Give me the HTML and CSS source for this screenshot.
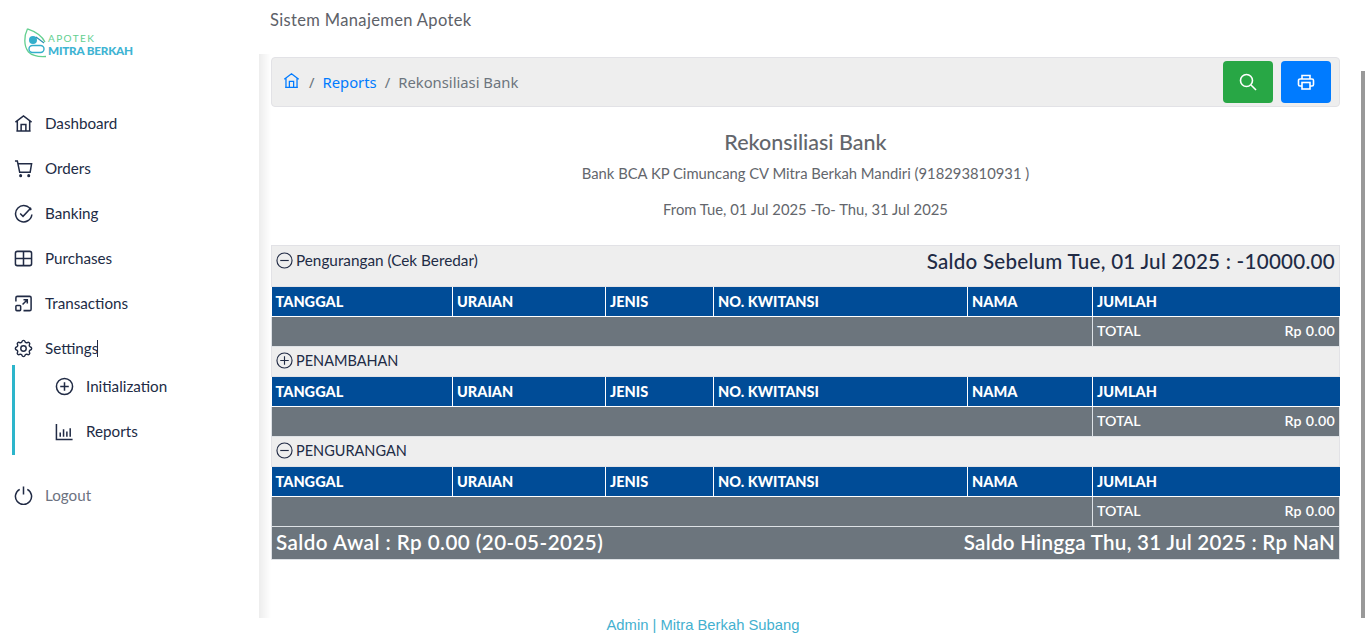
FILE: index.html
```html
<!DOCTYPE html>
<html lang="id">
<head>
<meta charset="utf-8">
<title>Rekonsiliasi Bank</title>
<link rel="stylesheet" href="styles.css">
</head>
<body>
<div class="app">
  <aside class="sidebar">
    <div class="logo">
      <svg class="logo-mark" viewBox="0 0 23 30" width="23" height="30">
        <path d="M3.500 .8C0 8-.5 18 4.500 24c4 4 10 5 17.500 4.500M3.500 .8C10 3 17 6 21 14" fill="none" stroke="#62cf8f" stroke-width="1.300"/>
        <circle cx="9" cy="12" r="4" fill="#33aecb"/>
        <rect x="5" y="17.500" width="15" height="7" rx="3.500" fill="none" stroke="#33aecb" stroke-width="1.400"/>
        <path d="M12 9l8 6" stroke="#2b8fb0" stroke-width="1.200"/>
      </svg>
      <div class="logo-text">
        <span class="logo-top">APOTEK</span>
        <span class="logo-bottom">MITRA BERKAH</span>
      </div>
    </div>
    <nav class="nav">
      <a class="nav-item"><svg class="ic" viewBox="0 0 20 20"><path d="M1.500 8.500 10 2l8.500 6.500M3.500 7.500V18h13V7.500M7.500 18v-7h5v7M2.500 18h15"/></svg><span>Dashboard</span></a>
      <a class="nav-item"><svg class="ic" viewBox="0 0 20 20"><path d="M1 2h2.500l2.500 12h11l1.500-9H4"/><circle cx="7" cy="17.500" r=".8"/><circle cx="15.500" cy="17.500" r=".8"/></svg><span>Orders</span></a>
      <a class="nav-item"><svg class="ic" viewBox="0 0 20 20"><path d="M18 6.500A8.600 8.600 0 1 0 18.800 11"/><path d="M6.500 10l3 3 8.500-9"/></svg><span>Banking</span></a>
      <a class="nav-item"><svg class="ic" viewBox="0 0 20 20"><rect x="1.500" y="2.500" width="17" height="15" rx="2"/><path d="M10 2.500v15M1.500 10h17"/></svg><span>Purchases</span></a>
      <a class="nav-item"><svg class="ic" viewBox="0 0 20 20"><path d="M2 8V4a1.500 1.500 0 0 1 1.500-1.500h13A1.500 1.500 0 0 1 18 4v12a1.500 1.500 0 0 1-1.500 1.500H10"/><rect x="2" y="12" width="5" height="5.500" rx="1"/><path d="M9 11l5-5M10 6h4v4"/></svg><span>Transactions</span></a>
      <a class="nav-item"><svg class="ic" viewBox="1.500 1.500 21 21"><circle cx="12" cy="12" r="3"/><path d="M10.325 4.317c.426-1.756 2.924-1.756 3.350 0a1.724 1.724 0 0 0 2.573 1.066c1.543-.94 3.310.826 2.370 2.370a1.724 1.724 0 0 0 1.065 2.572c1.756.426 1.756 2.924 0 3.350a1.724 1.724 0 0 0-1.066 2.573c.94 1.543-.826 3.310-2.370 2.370a1.724 1.724 0 0 0-2.572 1.065c-.426 1.756-2.924 1.756-3.350 0a1.724 1.724 0 0 0-2.573-1.066c-1.543.94-3.310-.826-2.370-2.370a1.724 1.724 0 0 0-1.065-2.572c-1.756-.426-1.756-2.924 0-3.350a1.724 1.724 0 0 0 1.066-2.573c-.94-1.543.826-3.310 2.370-2.370 1 .608 2.296.07 2.572-1.065z"/></svg><span class="caret-text">Settings</span></a>
      <div class="subnav">
        <a class="nav-item sub-item"><svg class="ic" viewBox="0 0 20 20"><circle cx="10" cy="10" r="8.500"/><path d="M10 5.500v9M5.500 10h9"/></svg><span>Initialization</span></a>
        <a class="nav-item sub-item"><svg class="ic" viewBox="0 0 20 20"><path d="M1.500 2v16.500h17M5.500 11v4.500M9 7.500v8M12.500 10v5.500M16 6.500v9"/></svg><span>Reports</span></a>
      </div>
      <a class="nav-item logout"><svg class="ic" viewBox="0 0 20 20"><path d="M6 3.500a8.500 8.500 0 1 0 8 0M10 .5v8.500"/></svg><span>Logout</span></a>
    </nav>
  </aside>
  <div class="main">
    <header class="topbar">Sistem Manajemen Apotek</header>
    <div class="content">
      <div class="crumbs">
        <ol class="crumb-list">
          <li><svg class="ic-home" viewBox="0 0 20 20"><path d="M1.500 8.500 10 2l8.500 6.500M3.500 7.500V18h13V7.500M7.500 18v-7h5v7M2.500 18h15"/></svg></li>
          <li class="sep">/</li>
          <li class="crumb-link">Reports</li>
          <li class="sep">/</li>
          <li>Rekonsiliasi Bank</li>
        </ol>
        <div class="actions">
          <button class="btn btn-green"><svg class="ic-btn" viewBox="0 0 18 18"><circle cx="7.500" cy="7.500" r="6"/><path d="m12 12 5 5"/></svg></button>
          <button class="btn btn-blue"><svg class="ic-btn" viewBox="0 0 18 18"><path d="M5 6V2.500h8V6M5 13H3a1.500 1.500 0 0 1-1.500-1.500v-4A1.500 1.500 0 0 1 3 6h12a1.500 1.500 0 0 1 1.500 1.500v4A1.500 1.500 0 0 1 15 13h-2"/><rect x="5" y="9.500" width="8" height="6.500"/></svg></button>
        </div>
      </div>
      <div class="report-head">
        <h1>Rekonsiliasi Bank</h1>
        <p class="bank">Bank BCA KP Cimuncang CV Mitra Berkah Mandiri (918293810931 )</p>
        <p class="period">From Tue, 01 Jul 2025 -To- Thu, 31 Jul 2025</p>
      </div>
      <table class="report">
        <colgroup><col class="c1"><col class="c2"><col class="c3"><col class="c4"><col class="c5"><col></colgroup>
        <tbody>
          <tr class="section first">
            <td colspan="3"><span class="sec-label"><svg class="ic-sec" viewBox="0 0 18 18"><circle cx="9" cy="9" r="8"/><path d="M4.500 9h9"/></svg>Pengurangan (Cek Beredar)</span></td>
            <td colspan="3" class="balance">Saldo Sebelum Tue, 01 Jul 2025 : -10000.00</td>
          </tr>
          <tr class="head"><td>TANGGAL</td><td>URAIAN</td><td>JENIS</td><td>NO. KWITANSI</td><td>NAMA</td><td>JUMLAH</td></tr>
          <tr class="total"><td colspan="5"></td><td><div class="total-row"><span>TOTAL</span><span class="amount">Rp 0.00</span></div></td></tr>
          <tr class="section"><td colspan="6"><span class="sec-label"><svg class="ic-sec" viewBox="0 0 18 18"><circle cx="9" cy="9" r="8"/><path d="M4.500 9h9M9 4.500v9"/></svg>PENAMBAHAN</span></td></tr>
          <tr class="head"><td>TANGGAL</td><td>URAIAN</td><td>JENIS</td><td>NO. KWITANSI</td><td>NAMA</td><td>JUMLAH</td></tr>
          <tr class="total"><td colspan="5"></td><td><div class="total-row"><span>TOTAL</span><span class="amount">Rp 0.00</span></div></td></tr>
          <tr class="section"><td colspan="6"><span class="sec-label"><svg class="ic-sec" viewBox="0 0 18 18"><circle cx="9" cy="9" r="8"/><path d="M4.500 9h9"/></svg>PENGURANGAN</span></td></tr>
          <tr class="head"><td>TANGGAL</td><td>URAIAN</td><td>JENIS</td><td>NO. KWITANSI</td><td>NAMA</td><td>JUMLAH</td></tr>
          <tr class="total"><td colspan="5"></td><td><div class="total-row"><span>TOTAL</span><span class="amount">Rp 0.00</span></div></td></tr>
          <tr class="summary"><td colspan="6"><div class="summary-row"><span class="saldo-left">Saldo Awal : Rp 0.00 (20-05-2025)</span><span>Saldo Hingga Thu, 31 Jul 2025 : Rp NaN</span></div></td></tr>
        </tbody>
      </table>
    </div>
    <footer class="footer">Admin | Mitra Berkah Subang</footer>
  </div>
  <div class="scrollbar"></div>
</div>
</body>
</html>
```

FILE: styles.css
```css
* { box-sizing: border-box; }
html, body { margin: 0; height: 638px; overflow: hidden; background: #fff; }
body { font-family: "Lato", "Open Sans", sans-serif; color: #212b45; font-size: 14.5px; }
.app { display: flex; height: 638px; position: relative; }
.sidebar { width: 259px; flex: none; }
.logo { display: flex; align-items: flex-start; padding: 28px 0 0 24px; height: 101px; gap: 1px; }
.logo-text { display: flex; flex-direction: column; margin-top: 5px; }
.logo-top { font-size: 10px; letter-spacing: 1.400px; color: #62cf8f; line-height: 10px; }
.logo-bottom { font-size: 11.700px; font-weight: 900; color: #3fb4d3; line-height: 13px; margin-top: 1px; letter-spacing: -.2px; }
.nav { display: flex; flex-direction: column; font-size: 15.200px; }
.nav-item { display: flex; align-items: center; gap: 12px; height: 45px; padding-left: 14px; color: #212b45; }
.nav-item span { margin-top: -2px; }
.nav-item .caret-text { margin-top: 0; border-right: 1px solid #212b45; line-height: 17px; width: 53px; }
.ic { width: 19px; height: 19px; fill: none; stroke: #212b45; stroke-width: 1.600; flex: none; }
.subnav { border-left: 3px solid #2cb5cb; margin-left: 12px; height: 90px; margin-top: -6px; }
.sub-item { padding-left: 40px; }
.sub-item:first-child { margin-top: -1px; }
.logout { color: #6c7280; margin-top: 18px; }
.main { flex: 1; min-width: 0; display: flex; flex-direction: column; }
.topbar { height: 54px; padding: 10px 0 0 11px; font-size: 16.500px; color: #5d6168; letter-spacing: .35px; }
.content { height: 564px; padding: 3px 25px 0 12px; background: linear-gradient(to right, #ededed, #fff 12px); }
.crumbs { display: flex; justify-content: space-between; align-items: center; height: 50px; background: #eee; border: 1px solid #e2e2e6; border-radius: 4px; padding: 0 8px 0 12px; }
.crumb-list { display: flex; align-items: center; gap: 8px; list-style: none; margin: 0; padding: 0; font-family: "Noto Sans", sans-serif; font-size: 14.800px; color: #6c757d; }
.crumb-link { color: #007bff; }
.ic-home { width: 17px; height: 17px; fill: none; stroke: #007bff; stroke-width: 1.500; display: block; margin: -4px 1px 0 -1px; }
.actions { display: flex; gap: 8px; }
.btn { width: 50px; height: 42px; border: 0; border-radius: 4px; display: flex; align-items: center; justify-content: center; padding: 0; }
.btn-green { background: #28a745; }
.btn-blue { background: #007bff; }
.ic-btn { width: 18px; height: 18px; fill: none; stroke: #fff; stroke-width: 1.600; }
.report-head { text-align: center; color: #63666c; height: 138px; padding-top: 23px; }
.report-head h1 { margin: 0; font-size: 21.500px; font-weight: 500; line-height: 24px; }
.bank { margin: 9px 0 0; font-size: 14.800px; line-height: 20px; }
.period { margin: 16px 0 0; font-size: 14.800px; line-height: 20px; }
.report { width: 1069px; border-collapse: collapse; table-layout: fixed; }
.c1 { width: 181px; } .c2 { width: 153px; } .c3 { width: 108px; } .c4 { width: 254px; } .c5 { width: 125px; }
.report td { padding: 0 4px; }
.section td { background: #eee; height: 30px; border: 1px solid #e2e2e6; color: #212b45; }
.section.first td { height: 41px; vertical-align: top; padding-top: 5px; border-right: 0; font-size: 15.300px; }
.section.first td + td { border-left: 0; border-right: 1px solid #e2e2e6; }
.sec-label { display: inline-flex; align-items: center; gap: 3px; }
.ic-sec { width: 17px; height: 17px; fill: none; stroke: #212b45; stroke-width: 1.200; }
.section.first .balance { text-align: right; font-size: 20.600px; font-weight: 500; line-height: 24px; padding-top: 3px; letter-spacing: .25px; }
.head td { background: #004c97; color: #fff; font-weight: 900; height: 30px; border: 1px solid #fff; border-top: 0; }
.head td:first-child { border-left: 0; }
.head td:last-child { border-right: 0; }
.total td { background: #6c757d; color: #fff; height: 30px; border: 1px solid #dee2e6; font-weight: 600; font-size: 14.200px; padding-bottom: 2px; }
.amount { letter-spacing: .3px; }
.total-row, .summary-row { display: flex; justify-content: space-between; }
.summary td { background: #6c757d; color: #fff; height: 33px; border: 1px solid #dee2e6; font-size: 20.600px; font-weight: 600; letter-spacing: .25px; padding-bottom: 2px; }
.saldo-left { letter-spacing: .45px; }
.footer { height: 20px; padding-right: 218px; text-align: center; font-family: "Liberation Sans", sans-serif; font-size: 14.800px; color: #44b0cf; line-height: 14px; }
.scrollbar { position: absolute; right: 0; top: 71px; width: 4px; height: 547px; background: #999; }
```
